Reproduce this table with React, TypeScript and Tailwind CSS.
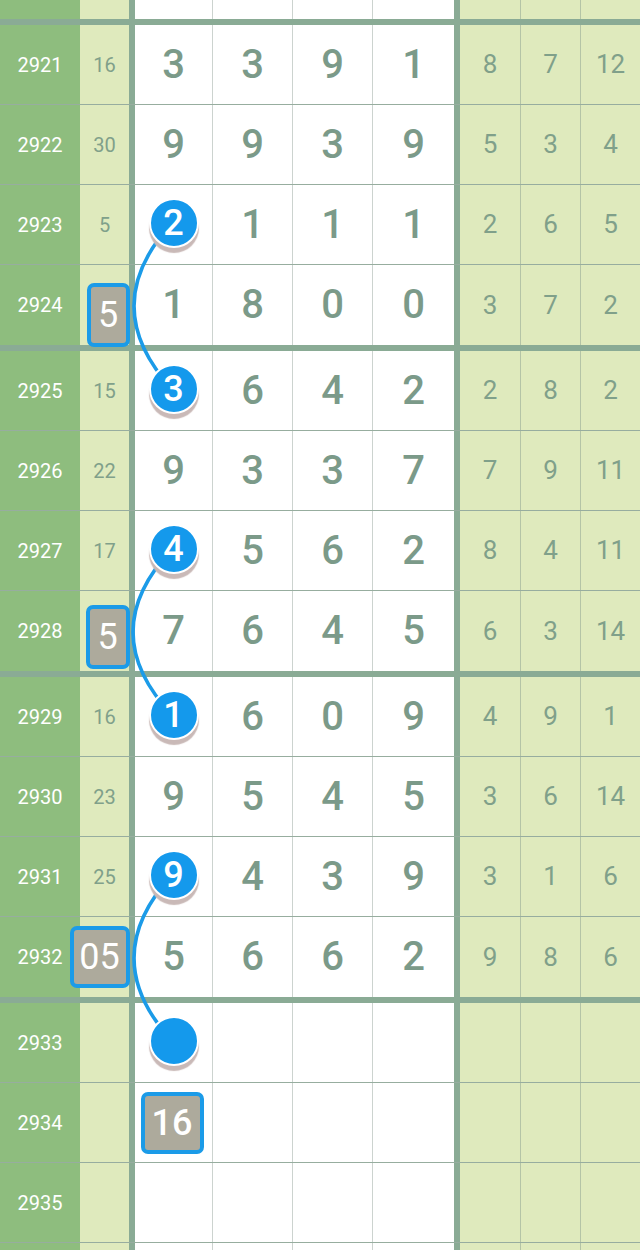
import React from 'react'

interface Row {
  no: number
  miss?: string
  missBox?: { label: string; cls: string }
  digits: (string | null)[]
  ball?: string
  box16?: boolean
  tail: string[]
  last?: boolean
}

const ROWS: Row[] = [
  { no: 2921, miss: '16', digits: ['3', '3', '9', '1'], tail: ['8', '7', '12'] },
  { no: 2922, miss: '30', digits: ['9', '9', '3', '9'], tail: ['5', '3', '4'] },
  { no: 2923, miss: '5', digits: [null, '1', '1', '1'], ball: '2', tail: ['2', '6', '5'] },
  { no: 2924, missBox: { label: '5', cls: 'w-[43px] h-[64px] mt-[20px]' }, digits: ['1', '8', '0', '0'], tail: ['3', '7', '2'], last: true },
  { no: 2925, miss: '15', digits: [null, '6', '4', '2'], ball: '3', tail: ['2', '8', '2'] },
  { no: 2926, miss: '22', digits: ['9', '3', '3', '7'], tail: ['7', '9', '11'] },
  { no: 2927, miss: '17', digits: [null, '5', '6', '2'], ball: '4', tail: ['8', '4', '11'] },
  { no: 2928, missBox: { label: '5', cls: 'w-[44px] h-[64px] mt-[12px]' }, digits: ['7', '6', '4', '5'], tail: ['6', '3', '14'], last: true },
  { no: 2929, miss: '16', digits: [null, '6', '0', '9'], ball: '1', tail: ['4', '9', '1'] },
  { no: 2930, miss: '23', digits: ['9', '5', '4', '5'], tail: ['3', '6', '14'] },
  { no: 2931, miss: '25', digits: [null, '4', '3', '9'], ball: '9', tail: ['3', '1', '6'] },
  { no: 2932, missBox: { label: '05', cls: 'w-[60px] h-[62px]' }, digits: ['5', '6', '6', '2'], tail: ['9', '8', '6'], last: true },
  { no: 2933, digits: [null, null, null, null], ball: '', tail: ['', '', ''] },
  { no: 2934, digits: [null, null, null, null], box16: true, tail: ['', '', ''] },
  { no: 2935, digits: [null, null, null, null], tail: ['', '', ''] },
]

const WHITE_W = ['w-[78px]', 'w-[80px]', 'w-[80px]', 'w-[87px]']
const TAIL_W = ['w-[61px] border-r', 'w-[60px] border-r', 'w-[59px]']

function Ball({ label }: { label: string }) {
  return (
    <div className="relative z-10 -translate-y-[2px] w-[50px] h-[50px] rounded-full bg-[#1499ec] border-2 border-white shadow-[0_5px_1px_#c9b9b7] flex items-center justify-center text-white text-[36px] font-medium leading-none">
      {label}
    </div>
  )
}

function Box({ label, cls }: { label: string; cls: string }) {
  return (
    <div
      className={`relative z-10 shrink-0 rounded-[7px] border-[4px] border-[#1b9be8] bg-[#adaa9c] flex items-center justify-center text-white text-[36px] leading-none ${cls}`}
    >
      {label}
    </div>
  )
}

function Cells({ row }: { row?: Row }) {
  return (
    <>
      <div className="w-[80px] shrink-0 bg-[#8ebd7e] flex items-center justify-center text-white text-[20px]">
        {row?.no}
      </div>
      <div className="w-[55px] shrink-0 bg-[#dfeabd] border-r-[6px] border-[#8aab95] flex items-center justify-center text-[#80a08a] text-[20px]">
        {row?.missBox ? (
          <div className="w-full flex justify-end -mr-[1px]">
            <Box label={row.missBox.label} cls={row.missBox.cls} />
          </div>
        ) : (
          row?.miss
        )}
      </div>
      {WHITE_W.map((w, i) => (
        <div
          key={i}
          className={`${w} shrink-0 bg-white flex items-center justify-center text-[#7b9a89] text-[40px] font-medium ${
            i === 3 ? 'border-r-[6px] border-[#8aab95]' : 'border-r border-[#ccd3cf]'
          }`}
        >
          {row && i === 0 && row.ball !== undefined ? (
            <Ball label={row.ball} />
          ) : row && i === 0 && row.box16 ? (
            <Box label="16" cls="w-[63px] h-[62px] -ml-[3px]" />
          ) : (
            row?.digits[i]
          )}
        </div>
      ))}
      {TAIL_W.map((w, i) => (
        <div
          key={i}
          className={`${w} shrink-0 bg-[#dfeabd] border-[#b4c4a6] flex items-center justify-center text-[#80a08a] text-[26px]`}
        >
          {row?.tail[i]}
        </div>
      ))}
    </>
  )
}

export default function App() {
  return (
    <div className="relative w-[640px] h-[1250px] overflow-hidden bg-white font-['Roboto',sans-serif]">
      <div className="flex h-[25px] border-b-[6px] border-[#8aab95]">
        <Cells />
      </div>
      {ROWS.map((row) => (
        <div
          key={row.no}
          className={`flex ${row.last ? 'h-[86px] border-b-[6px] border-[#8aab95]' : 'h-[80px] border-b border-[#97ad9f]'}`}
        >
          <Cells row={row} />
        </div>
      ))}
      <div className="flex h-[20px]">
        <Cells />
      </div>

      <svg className="absolute left-0 top-0 pointer-events-none" width="640" height="1250" viewBox="0 0 640 1250" fill="none">
        <path d="M173 222 Q95 306 173 390" stroke="#1b9be8" strokeWidth="3.5" />
        <path d="M173 548 Q93 632 173 716" stroke="#1b9be8" strokeWidth="3.5" />
        <path d="M173 874 Q95 958 173 1042" stroke="#1b9be8" strokeWidth="3.5" />
      </svg>
    </div>
  )
}
